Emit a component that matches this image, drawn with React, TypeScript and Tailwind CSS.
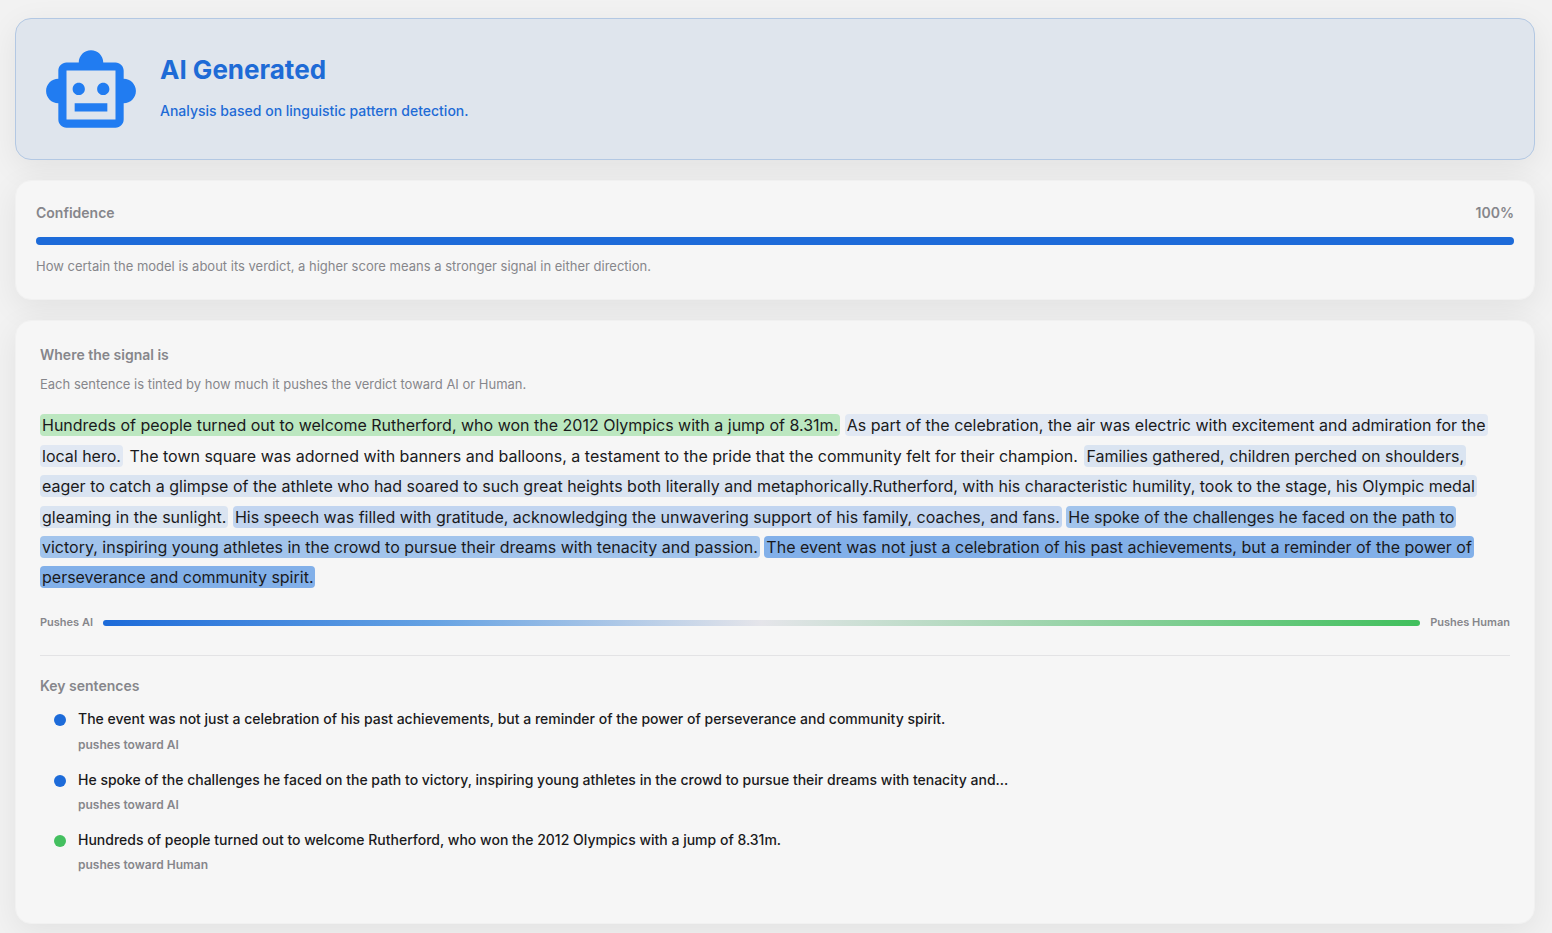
import React from 'react';
import { MdOutlineSmartToy } from 'react-icons/md';

interface Sentence {
  text: string;
  tint: string;
}

interface KeySentence {
  text: string;
  toward: 'AI' | 'Human';
}

const sentences: Sentence[] = [
  { text: 'Hundreds of people turned out to welcome Rutherford, who won the 2012 Olympics with a jump of 8.31m.', tint: 'bg-[#bce7c0]' },
  { text: 'As part of the celebration, the air was electric with excitement and admiration for the local hero.', tint: 'bg-[#e1e8f3]' },
  { text: 'The town square was adorned with banners and balloons, a testament to the pride that the community felt for their champion.', tint: '' },
  { text: 'Families gathered, children perched on shoulders, eager to catch a glimpse of the athlete who had soared to such great heights both literally and metaphorically.Rutherford, with his characteristic humility, took to the stage, his Olympic medal gleaming in the sunlight.', tint: 'bg-[#dae4f1]' },
  { text: 'His speech was filled with gratitude, acknowledging the unwavering support of his family, coaches, and fans.', tint: 'bg-[#c2d5f0]' },
  { text: 'He spoke of the challenges he faced on the path to victory, inspiring young athletes in the crowd to pursue their dreams with tenacity and passion.', tint: 'bg-[#a2c4ec]' },
  { text: 'The event was not just a celebration of his past achievements, but a reminder of the power of perseverance and community spirit.', tint: 'bg-[#82b0e9]' },
];

const keySentences: KeySentence[] = [
  { text: 'The event was not just a celebration of his past achievements, but a reminder of the power of perseverance and community spirit.', toward: 'AI' },
  { text: 'He spoke of the challenges he faced on the path to victory, inspiring young athletes in the crowd to pursue their dreams with tenacity and…', toward: 'AI' },
  { text: 'Hundreds of people turned out to welcome Rutherford, who won the 2012 Olympics with a jump of 8.31m.', toward: 'Human' },
];

const cardStyle = 'rounded-2xl border border-[#f1f1f1] bg-[#f6f6f6] shadow-[0_8px_32px_rgba(0,0,0,0.07)]';

function VerdictCard() {
  return (
    <section className="flex h-[142px] items-center rounded-2xl border border-[#b3c8e3] bg-[#dfe5ed] pl-[26px] shadow-[0_8px_32px_rgba(0,0,0,0.07)]">
      <MdOutlineSmartToy className="mt-1 size-[98px] text-[#217cf1]" />
      <div className="ml-5">
        <h1 className="text-[26px] leading-8 font-bold text-[#1e6bd6]">AI Generated</h1>
        <p className="mt-[15px] mb-[3px] text-sm leading-5 font-medium text-[#1e6bd6]">Analysis based on linguistic pattern detection.</p>
      </div>
    </section>
  );
}

function ConfidenceCard({ value }: { value: number }) {
  return (
    <section className={`mt-5 h-[120px] px-5 pt-[22px] ${cardStyle}`}>
      <div className="flex justify-between text-sm leading-5 font-semibold text-[#86868b]">
        <span>Confidence</span>
        <span>{value}%</span>
      </div>
      <div className="mt-[14px] h-2 rounded-full bg-gray-200">
        <div className="h-2 rounded-full bg-[#1d6bd9]" style={{ width: `${value}%` }} />
      </div>
      <p className="mt-[11px] text-[13px] leading-5 text-[#86868b]">
        How certain the model is about its verdict, a higher score means a stronger signal in either direction.
      </p>
    </section>
  );
}

function SignalCard() {
  return (
    <section className={`mt-5 h-[604px] px-6 pt-6 ${cardStyle}`}>
      <h2 className="text-sm leading-5 font-semibold text-[#86868b]">Where the signal is</h2>
      <p className="mt-[9px] text-[13px] leading-5 text-[#86868b]">
        Each sentence is tinted by how much it pushes the verdict toward AI or Human.
      </p>
      <p className="mt-[16.3px] text-base leading-[30.4px] text-[#1a1a1c]">
        {sentences.map((sentence) => (
          <React.Fragment key={sentence.text}>
            <span className={`rounded-[4px] box-decoration-clone px-0.5 py-px ${sentence.tint}`}>{sentence.text}</span>{' '}
          </React.Fragment>
        ))}
      </p>

      <div className="mt-[19.5px] flex items-center gap-2.5 text-[11px] leading-5 font-semibold text-[#86868b]">
        <span>Pushes AI</span>
        <div className="mt-0.5 h-1.5 flex-1 rounded-full bg-[linear-gradient(90deg,#1d6bd9,#65a2e3_25%,#e5e5ea_50%,#40bf5c)]" />
        <span>Pushes Human</span>
      </div>

      <div className="mt-[23.2px] border-t border-[#e3e3e5] pt-5">
        <h2 className="text-sm leading-5 font-semibold text-[#86868b]">Key sentences</h2>
        <ul className="mt-3 space-y-[14.7px] pl-[14px]">
          {keySentences.map((item) => (
            <li key={item.text} className="flex gap-3">
              <span className={`mt-[6px] size-3 rounded-full ${item.toward === 'AI' ? 'bg-[#1d6bd9]' : 'bg-[#43bf5f]'}`} />
              <div>
                <p className="text-sm leading-[22px] font-medium text-[#1a1a1c]">{item.text}</p>
                <p className="mt-[5.5px] text-xs leading-[18px] font-semibold text-[#86868b]">pushes toward {item.toward}</p>
              </div>
            </li>
          ))}
        </ul>
      </div>
    </section>
  );
}

export default function App() {
  return (
    <main className="h-[933px] overflow-hidden bg-[#f2f2f2] pt-[18px] pr-[17px] pl-[15px] font-['Inter',sans-serif]">
      <VerdictCard />
      <ConfidenceCard value={100} />
      <SignalCard />
    </main>
  );
}
